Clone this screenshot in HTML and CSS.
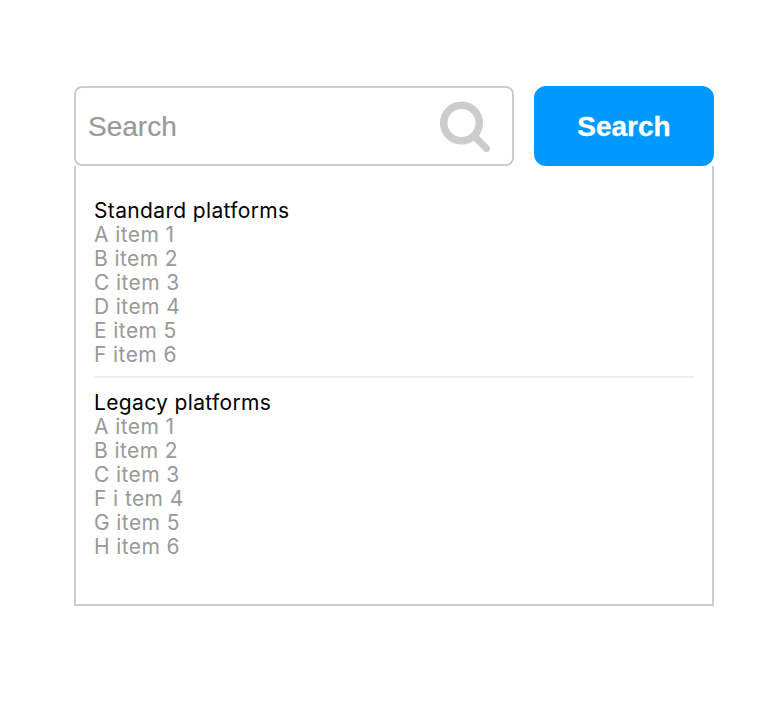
FILE: index.html
```html
<!DOCTYPE html>
<html lang="en">
<head>
<meta charset="utf-8">
<title>Search</title>
<link rel="stylesheet" href="styles.css">
</head>
<body>
<main class="widget">
  <div class="bar">
    <div class="field">
      <span class="placeholder">Search</span>
      <svg class="icon" width="52" height="52" viewBox="0 0 52 52" aria-hidden="true">
        <circle cx="21.5" cy="22" r="17.75" fill="none" stroke="#ccc" stroke-width="7.5"/>
        <path d="M34 35 L46.5 47.5" fill="none" stroke="#ccc" stroke-width="7" stroke-linecap="round"/>
      </svg>
    </div>
    <button class="btn">Search</button>
  </div>
  <div class="panel">
    <section class="group">
      <h2 class="title">Standard platforms</h2>
      <ul class="list">
        <li>A item 1</li><li>B item 2</li><li>C item 3</li><li>D item 4</li><li>E item 5</li><li>F item 6</li>
      </ul>
    </section>
    <hr class="rule">
    <section class="group">
      <h2 class="title">Legacy platforms</h2>
      <ul class="list">
        <li>A item 1</li><li>B item 2</li><li>C item 3</li><li>F i tem 4</li><li>G item 5</li><li>H item 6</li>
      </ul>
    </section>
  </div>
</main>
</body>
</html>
```
FILE: styles.css
```css
* { box-sizing: border-box; }
html, body { margin: 0; background: #fff; }
body { padding: 86px 70px 0 74px; font-family: "Inter", "Liberation Sans", sans-serif; }
.widget { width: 640px; }
.bar { display: flex; gap: 20px; height: 80px; }
.field {
  flex: 1;
  display: flex;
  align-items: center;
  justify-content: space-between;
  border: 2px solid #ccc;
  border-radius: 8px;
  padding: 0 20px 0 12px;
}
.placeholder {
  padding-top: 2px;
  font-family: "Liberation Sans", sans-serif;
  font-size: 28px;
  color: #999;
  -webkit-text-stroke: 0.2px #999;
}
.icon { display: block; flex: none; margin-top: 2px; }
.btn {
  width: 180px;
  border: 0;
  border-radius: 12px;
  background: #09f;
  color: #fff;
  font-family: "Liberation Sans", sans-serif;
  font-weight: 700;
  font-size: 28px;
  padding: 2px 0 0;
  -webkit-text-stroke: 0.3px #fff;
}
.panel {
  height: 440px;
  border: 2px solid #ccc;
  border-top: 0;
  padding: 33px 18px 0;
}
.title { margin: 0; font-size: 21px; font-weight: 400; line-height: 24px; letter-spacing: 0.35px; color: #000; }
.list { margin: 0; padding: 0; list-style: none; font-size: 21px; line-height: 24px; letter-spacing: 0.4px; color: #999; }
.rule { border: 0; height: 2px; background: #eee; margin: 9px 0 13px; }
```
